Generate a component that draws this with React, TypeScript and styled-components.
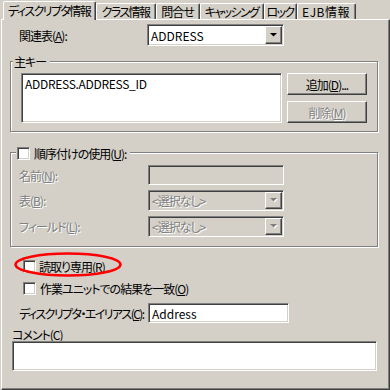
import React from "react";
import styled, { createGlobalStyle, css } from "styled-components";

const FACE = "#D4D0C8";
const HI = "#FFFFFF";
const SH = "#808080";
const DK = "#404040";

const GlobalStyle = createGlobalStyle`
  html, body { margin: 0; padding: 0; background: ${FACE}; }
  body { font-family: "Noto Sans CJK JP", "Noto Sans", sans-serif; }
`;

const Window = styled.div`
  width: 390px;
  height: 390px;
  box-sizing: border-box;
  padding-left: 1px;
  background: ${FACE};
  display: flex;
  flex-direction: column;
  font-family: "Noto Sans CJK JP", "Noto Sans", sans-serif;
  font-size: 12px;
  line-height: 13px;
  letter-spacing: -1px;
  color: #000;
  font-feature-settings: "palt";
  overflow: hidden;
  position: relative;
`;

const TabStrip = styled.div`
  height: 19px;
  flex: none;
  display: flex;
  align-items: flex-end;
  padding-left: 2px;
`;

const Tab = styled.div<{ $w: number; $ls: number; $active?: boolean }>`
  width: ${(p) => p.$w}px;
  box-sizing: border-box;
  height: ${(p) => (p.$active ? 19 : 16)}px;
  margin-bottom: ${(p) => (p.$active ? -1 : 0)}px;
  border-top: 1px solid ${HI};
  border-left: 1px solid ${HI};
  border-right: 1px solid ${DK};
  border-radius: 2px 2px 0 0;
  box-shadow: inset -1px 0 0 ${SH};
  background: ${FACE};
  display: flex;
  justify-content: center;
  align-items: flex-start;
  padding-top: ${(p) => (p.$active ? 2 : 1)}px;
  padding-right: 1px;
  white-space: nowrap;
  letter-spacing: ${(p) => p.$ls}px;
  position: relative;
  z-index: ${(p) => (p.$active ? 1 : 0)};
`;

const Panel = styled.div`
  flex: 1;
  border-top: 1px solid ${HI};
  border-left: 1px solid ${HI};
  border-right: 1px solid ${DK};
  border-bottom: 1px solid ${DK};
  box-shadow: inset -1px -1px 0 ${SH};
  display: flex;
  flex-direction: column;
  align-items: flex-start;
`;

const FormRow = styled.div<{ $label: number; $indent?: number; $top?: number }>`
  display: grid;
  grid-template-columns: ${(p) => p.$label}px auto;
  align-items: center;
  padding-left: ${(p) => p.$indent ?? 0}px;
  margin-top: ${(p) => p.$top ?? 0}px;
`;

const Label = styled.span<{ $disabled?: boolean; $tight?: boolean }>`
  white-space: nowrap;
  letter-spacing: ${(p) => (p.$tight ? "-1.6px" : "-1px")};
  ${(p) =>
    p.$disabled &&
    css`
      color: ${SH};
      text-shadow: 1px 1px 0 ${HI};
    `}
`;

const sunken = css`
  box-sizing: border-box;
  border: 1px solid;
  border-color: ${SH} ${HI} ${HI} ${SH};
  box-shadow: inset 1px 1px 0 ${DK}, inset -1px -1px 0 ${FACE};
`;

const raised = css`
  box-sizing: border-box;
  border: 1px solid;
  border-color: ${HI} ${DK} ${DK} ${HI};
  box-shadow: inset -1px -1px 0 ${SH};
  background: ${FACE};
`;

const Combo = styled.div<{ $w: number; $h: number; $disabled?: boolean }>`
  ${sunken};
  width: ${(p) => p.$w}px;
  height: ${(p) => p.$h}px;
  padding: 1px;
  display: flex;
  align-items: stretch;
  background: ${(p) => (p.$disabled ? FACE : HI)};
`;

const ComboText = styled.span<{ $disabled?: boolean; $latin?: boolean }>`
  flex: 1;
  display: flex;
  align-items: center;
  padding-left: 2px;
  white-space: nowrap;
  letter-spacing: ${(p) => (p.$latin ? "0" : "-1px")};
  ${(p) =>
    p.$disabled &&
    css`
      color: ${SH};
      text-shadow: 1px 1px 0 ${HI};
    `}
`;

const ArrowButton = styled.div`
  ${raised};
  width: 17px;
  flex: none;
  display: flex;
  align-items: center;
  justify-content: center;
`;

const Edit = styled.div<{ $w: number; $h: number; $disabled?: boolean }>`
  ${sunken};
  width: ${(p) => p.$w}px;
  height: ${(p) => p.$h}px;
  background: ${(p) => (p.$disabled ? FACE : HI)};
  display: flex;
  align-items: center;
  padding-left: 3px;
  white-space: nowrap;
  letter-spacing: 0;
`;

const GroupBox = styled.div<{ $top: number; $pad: string }>`
  position: relative;
  box-sizing: border-box;
  width: 368px;
  margin-left: 8px;
  margin-top: ${(p) => p.$top}px;
  border: 1px solid ${SH};
  box-shadow: 1px 1px 0 ${HI}, inset 1px 1px 0 ${HI};
  padding: ${(p) => p.$pad};
`;

const GroupTitle = styled.div<{ $left: number; $top: number }>`
  position: absolute;
  top: ${(p) => p.$top}px;
  left: ${(p) => p.$left}px;
  background: ${FACE};
  padding: 0 4px 0 1px;
  display: flex;
  align-items: center;
  gap: 4px;
  white-space: nowrap;
`;

const KeyArea = styled.div`
  display: flex;
  gap: 5px;
`;

const ListBox = styled.div`
  ${sunken};
  width: 261px;
  height: 50px;
  background: ${HI};
  padding: 3px 3px;
  letter-spacing: -0.3px;
`;

const ButtonColumn = styled.div`
  display: flex;
  flex-direction: column;
  gap: 6px;
`;

const Button = styled.div<{ $disabled?: boolean }>`
  ${raised};
  width: 80px;
  height: 22px;
  display: flex;
  align-items: center;
  justify-content: center;
  white-space: nowrap;
  ${(p) =>
    p.$disabled &&
    css`
      color: ${SH};
      text-shadow: 1px 1px 0 ${HI};
    `}
`;

const FieldStack = styled.div`
  display: flex;
  flex-direction: column;
  gap: 5px;
`;

const CheckBox = styled.span`
  ${sunken};
  display: inline-block;
  width: 13px;
  height: 13px;
  background: ${HI};
  flex: none;
`;

const CheckRow = styled.div<{ $top: number; $gap: number }>`
  display: flex;
  align-items: center;
  gap: ${(p) => p.$gap}px;
  margin-left: 21px;
  margin-top: ${(p) => p.$top}px;
  white-space: nowrap;
`;

const CommentLabel = styled.div`
  margin-left: 10px;
  margin-top: 5px;
  height: 13px;
`;

const CommentBox = styled.div`
  ${sunken};
  width: 365px;
  height: 30px;
  margin-left: 10px;
  background: ${HI};
`;

const Highlight = styled.svg`
  position: absolute;
  left: 14px;
  top: 252px;
  width: 108px;
  height: 25px;
  overflow: visible;
  pointer-events: none;
`;

const Arrow = ({ disabled }: { disabled?: boolean }) => (
  <svg width="8" height="5" viewBox="0 0 8 5" style={{ overflow: "visible" }}>
    {disabled && <polygon points="1,1 8,1 4.5,4.5" fill={HI} />}
    <polygon points="0,0 7,0 3.5,3.5" fill={disabled ? SH : "#000"} />
  </svg>
);

const tabs: { label: string; w: number; ls: number; active?: boolean }[] = [
  { label: "ディスクリプタ情報", w: 93, ls: -1.6, active: true },
  { label: "クラス情報", w: 60, ls: -1.6 },
  { label: "問合せ", w: 44, ls: -1 },
  { label: "キャッシング", w: 64, ls: -1.6 },
  { label: "ロック", w: 33, ls: -1.6 },
  { label: "EJB情報", w: 59, ls: 0.5 },
];

export default function App() {
  return (
    <>
      <GlobalStyle />
      <Window>
        <TabStrip>
          {tabs.map((t) => (
            <Tab key={t.label} $w={t.w} $ls={t.ls} $active={t.active}>
              {t.label}
            </Tab>
          ))}
        </TabStrip>
        <Panel>
          <FormRow $label={128} $indent={17} $top={4}>
            <Label>
              関連表(<u>A</u>):
            </Label>
            <Combo $w={137} $h={22}>
              <ComboText $latin>ADDRESS</ComboText>
              <ArrowButton>
                <Arrow />
              </ArrowButton>
            </Combo>
          </FormRow>

          <GroupBox $top={15} $pad="11px 10px 8px 10px">
            <GroupTitle $left={2} $top={-7}>
              主キー
            </GroupTitle>
            <KeyArea>
              <ListBox>ADDRESS.ADDRESS_ID</ListBox>
              <ButtonColumn>
                <Button>
                  追加(<u>D</u>)...
                </Button>
                <Button $disabled>
                  削除(<u>M</u>)
                </Button>
              </ButtonColumn>
            </KeyArea>
          </GroupBox>

          <GroupBox $top={20} $pad="12px 8px 9px 8px">
            <GroupTitle $left={5} $top={-6}>
              <CheckBox />
              <span>
                順序付けの使用(<u>U</u>):
              </span>
            </GroupTitle>
            <FieldStack>
              <FormRow $label={129}>
                <Label $disabled>
                  名前(<u>N</u>):
                </Label>
                <Edit $w={136} $h={20} $disabled />
              </FormRow>
              <FormRow $label={129}>
                <Label $disabled>
                  表(<u>B</u>):
                </Label>
                <Combo $w={136} $h={21} $disabled>
                  <ComboText $disabled>&lt;選択なし&gt;</ComboText>
                  <ArrowButton>
                    <Arrow disabled />
                  </ArrowButton>
                </Combo>
              </FormRow>
              <FormRow $label={129}>
                <Label $disabled>
                  フィールド(<u>L</u>):
                </Label>
                <Combo $w={136} $h={21} $disabled>
                  <ComboText $disabled>&lt;選択なし&gt;</ComboText>
                  <ArrowButton>
                    <Arrow disabled />
                  </ArrowButton>
                </Combo>
              </FormRow>
            </FieldStack>
          </GroupBox>

          <CheckRow $top={13} $gap={3}>
            <CheckBox />
            <span>
              読取り専用(<u>R</u>)
            </span>
          </CheckRow>
          <CheckRow $top={9} $gap={4}>
            <CheckBox />
            <span>
              作業ユニットでの結果を一致(<u>O</u>)
            </span>
          </CheckRow>

          <FormRow $label={129} $indent={17} $top={8}>
            <Label $tight>
              ディスクリプタ・エイリアス(<u>C</u>):
            </Label>
            <Edit $w={141} $h={20}>
              Address
            </Edit>
          </FormRow>

          <CommentLabel>
            コメント(<u>C</u>)
          </CommentLabel>
          <CommentBox />
        </Panel>
        <Highlight viewBox="0 0 108 25">
          <ellipse cx="54" cy="12.5" rx="52.5" ry="11" fill="none" stroke="#FF0000" strokeWidth="2.6" />
        </Highlight>
      </Window>
    </>
  );
}
